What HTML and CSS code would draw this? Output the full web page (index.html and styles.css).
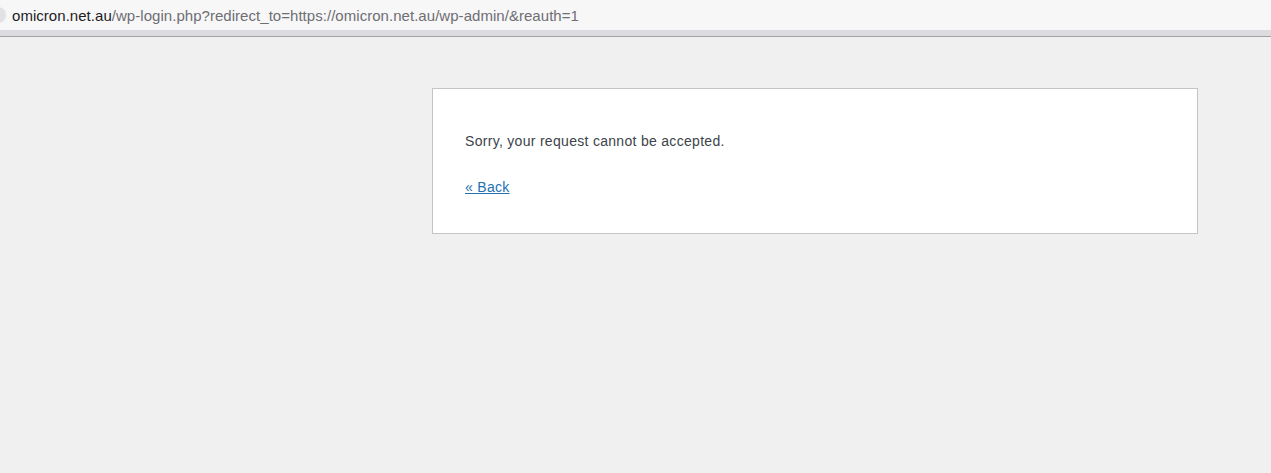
FILE: index.html
```html
<!DOCTYPE html>
<html lang="en">
<head>
  <meta charset="UTF-8">
  <title>WordPress &rsaquo; Error</title>
  <link rel="stylesheet" href="styles.css">
</head>
<body>
  <div class="url-bar">
    <span class="url-icon"></span>
    <span class="url-host">omicron.net.au</span><span class="url-path">/wp-login.php?redirect_to=https://omicron.net.au/wp-admin/&amp;reauth=1</span>
  </div>
  <div class="url-strip"></div>
  <div id="error-page">
    <div class="wp-die-message">
      <p>Sorry, your request cannot be accepted.</p>
      <p><a href="javascript:history.back()">&laquo; Back</a></p>
    </div>
  </div>
</body>
</html>
```

FILE: styles.css
```css
body {
  margin: 0;
  background: #f0f0f1;
  font-family: "Liberation Sans", Arial, sans-serif;
}
.url-bar {
  height: 30px;
  background: #f7f7f8;
  display: flex;
  align-items: center;
  padding-left: 12px;
  position: relative;
  font-size: 15px;
  letter-spacing: 0.04px;
}
.url-icon {
  position: absolute;
  left: -10px;
  top: 7px;
  width: 16px;
  height: 16px;
  border-radius: 50%;
  background: #e2e2e4;
}
.url-host { color: #1d1d1f; }
.url-path { color: #6e6e73; }
.url-strip {
  height: 6px;
  background: #dcdce0;
  border-bottom: 1px solid #a2a2a6;
}
#error-page {
  margin: 51px 0 0 432px;
  width: 700px;
  padding: 17px 32px 15px;
  background: #fff;
  border: 1px solid #c3c4c7;
  color: #3c434a;
}
#error-page p {
  font-size: 14px;
  line-height: 1.5;
  letter-spacing: 0.3px;
  margin: 25px 0 20px;
}
#error-page a {
  color: #2271b1;
}
```
